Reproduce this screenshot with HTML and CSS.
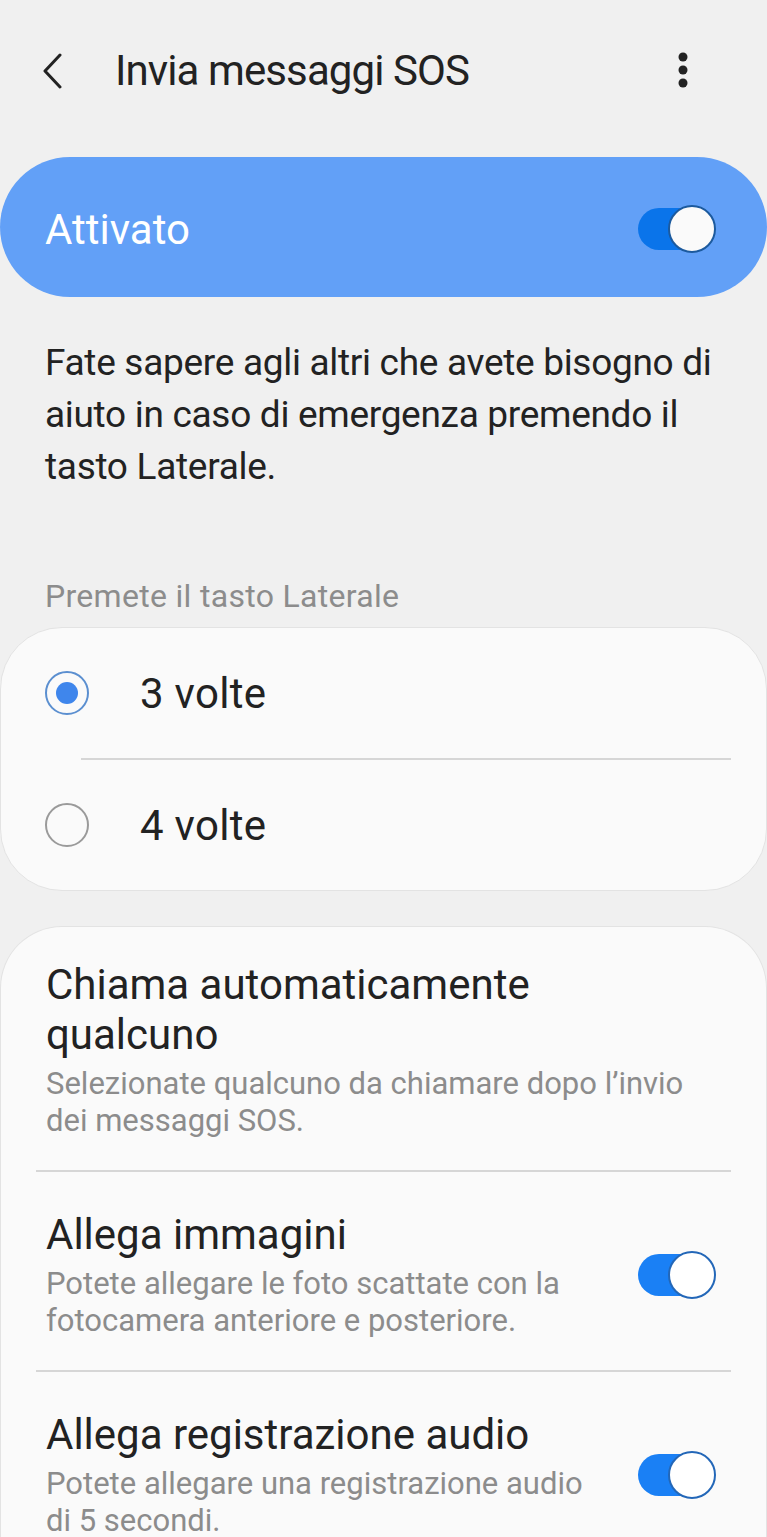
FILE: index.html
```html
<!DOCTYPE html>
<html>
<head>
  <meta charset="utf-8">
  <title>Invia messaggi SOS</title>
  <link rel="stylesheet" href="styles.css">
</head>
<body>
  <div class="header">
    <svg class="back" width="24" height="36" viewBox="0 0 24 36"><path d="M20 2 L5 18 L20 34" fill="none" stroke="#222" stroke-width="3" stroke-linecap="round" stroke-linejoin="round"/></svg>
    <div class="title">Invia messaggi SOS</div>
    <svg class="more" width="12" height="36" viewBox="0 0 12 36"><circle cx="6" cy="5" r="4.5" fill="#222"/><circle cx="6" cy="18" r="4.5" fill="#222"/><circle cx="6" cy="31" r="4.5" fill="#222"/></svg>
  </div>

  <div class="master">
    <span class="master-label">Attivato</span>
    <span class="switch on-dark"><span class="thumb"></span></span>
  </div>

  <p class="desc">Fate sapere agli altri che avete bisogno di aiuto in caso di emergenza premendo il tasto Laterale.</p>

  <div class="section-label">Premete il tasto Laterale</div>

  <div class="card radios">
    <div class="radio-row">
      <span class="radio checked"></span>
      <span class="radio-text">3 volte</span>
    </div>
    <div class="radio-divider"></div>
    <div class="radio-row">
      <span class="radio"></span>
      <span class="radio-text">4 volte</span>
    </div>
  </div>

  <div class="card options">
    <div class="option first">
      <div class="option-text">
        <div class="option-title narrow">Chiama automaticamente qualcuno</div>
        <div class="option-sub">Selezionate qualcuno da chiamare dopo l’invio dei messaggi SOS.</div>
      </div>
    </div>
    <div class="divider"></div>
    <div class="option">
      <div class="option-text">
        <div class="option-title">Allega immagini</div>
        <div class="option-sub">Potete allegare le foto scattate con la fotocamera anteriore e posteriore.</div>
      </div>
      <span class="switch"><span class="thumb"></span></span>
    </div>
    <div class="divider"></div>
    <div class="option">
      <div class="option-text">
        <div class="option-title">Allega registrazione audio</div>
        <div class="option-sub">Potete allegare una registrazione audio di 5 secondi.</div>
      </div>
      <span class="switch"><span class="thumb"></span></span>
    </div>
  </div>
</body>
</html>
```

FILE: styles.css
```css
html, body { margin: 0; padding: 0; }
body { background-color: #f0f0f0; font-family: Roboto, "Liberation Sans", sans-serif; color: #222; width: 767px; height: 1537px; overflow: hidden; }

.header { display: flex; align-items: center; height: 140px; padding: 0 0 0 40px; }
.back { margin-top: 2px; }
.title { margin-left: 51px; font-size: 42px; letter-spacing: -0.9px; flex: 1; }
.more { margin-right: 78px; }

.master { display: flex; align-items: center; justify-content: space-between; height: 140px; margin-top: 17px; padding: 0 51px 0 45px; background-color: #62a0f7; border-radius: 70px; }
.master-label { color: #fff; font-size: 42px; margin-top: 4px; }
.master .switch { margin-top: 4px; }

.switch { position: relative; display: inline-block; width: 62px; height: 42px; margin-right: 16px; background-color: #1a80f5; border-radius: 21px; flex-shrink: 0; }
.switch .thumb { position: absolute; top: -3px; right: -16px; width: 44px; height: 44px; background-color: #fff; border: 2px solid #2367b8; border-radius: 50%; }
.switch.on-dark { background-color: #0a74ea; }
.switch.on-dark .thumb { background-color: #fafafa; border-color: #1c5a9e; }

.desc { margin: 40px 40px 0 45px; font-size: 37px; line-height: 52px; letter-spacing: -0.3px; }

.section-label { margin: 84px 0 0 45px; font-size: 32px; letter-spacing: 0.3px; color: #8c8c8c; }

.card { background-color: #fafafa; border: 1px solid #e3e3e3; }
.radios { margin-top: 12px; border-radius: 62px; padding: 0; }
.radio-row { display: flex; align-items: center; height: 130px; padding-left: 44px; }
.radio { width: 40px; height: 40px; border: 2px solid #9a9a9a; border-radius: 50%; box-sizing: content-box; display: flex; align-items: center; justify-content: center; }
.radio.checked { border-color: #5b8fd0; }
.radio.checked::after { content: ""; width: 22px; height: 22px; border-radius: 50%; background-color: #3f86ec; }
.radio-text { margin-left: 51px; font-size: 42px; letter-spacing: 0.3px; }
.radio-divider { height: 2px; background-color: #d6d6d6; margin: 0 35px 0 80px; }

.options { margin-top: 35px; border-radius: 62px 62px 0 0; border-bottom: 0; padding-bottom: 40px; }
.option { display: flex; align-items: center; padding: 38px 35px 31px 45px; }
.option.first { padding-top: 33px; }
.option-text { flex: 1; }
.option-title { font-size: 42px; line-height: 50px; }
.option-title.narrow { max-width: 560px; }
.option-sub { margin-top: 5px; margin-right: 40px; font-size: 31px; line-height: 37px; color: #8c8c8c; }
.option .switch { margin-right: 31px; }
.divider { height: 2px; background-color: #d6d6d6; margin: 0 35px; }
```
